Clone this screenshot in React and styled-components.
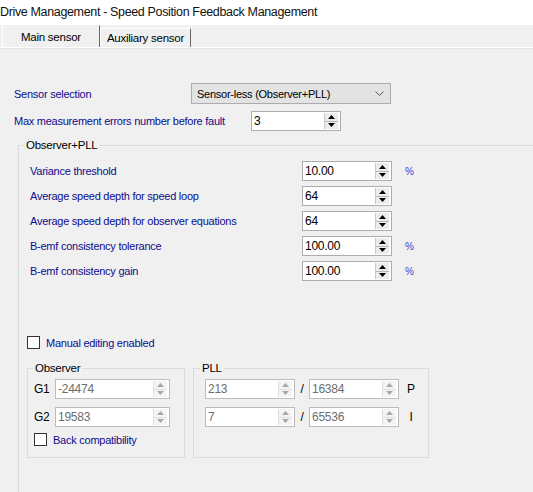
import React from "react";
import styled, { createGlobalStyle } from "styled-components";

const GlobalStyle = createGlobalStyle`
  html, body {
    margin: 0;
    padding: 0;
    background: #f0f0f0;
  }
  * {
    box-sizing: border-box;
  }
`;

const Window = styled.div`
  width: 533px;
  height: 492px;
  overflow: hidden;
  background: #f0f0f0;
  font-family: "Liberation Sans", Arial, sans-serif;
  font-size: 11px;
  letter-spacing: -0.25px;
  color: #000;
`;

const TitleBar = styled.div`
  height: 25px;
  background: #fff;
  font-size: 12.5px;
  letter-spacing: -0.35px;
  line-height: 24px;
  white-space: nowrap;
  color: #111;
`;

const TabStrip = styled.div`
  display: flex;
  align-items: flex-start;
  height: 23px;
  padding-left: 2px;
  border-bottom: 1px solid #fff;
`;

const Tab = styled.div`
  height: ${(p) => (p.$active ? "22px" : "19px")};
  margin-top: ${(p) => (p.$active ? "0" : "3px")};
  padding: 0 ${(p) => (p.$active ? "18px" : "6px")};
  line-height: ${(p) => (p.$active ? "22px" : "19px")};
  font-size: 11.5px;
  background: #f0f0f0;
  border-top: 1px solid ${(p) => (p.$active ? "#f0f0f0" : "#fff")};
  border-left: 1px solid #fff;
  border-right: 1px solid #696969;
  white-space: nowrap;
`;

const TabPage = styled.div`
  border-top: 1px solid #e3e3e3;
  padding: 34px 0 0 14px;
`;

const Row = styled.div`
  display: flex;
  align-items: center;
  height: ${(p) => p.$h || 20}px;
  margin-top: ${(p) => p.$mt || 0}px;
`;

const Label = styled.div`
  width: ${(p) => p.$w}px;
  flex-shrink: 0;
  color: ${(p) => (p.$plain ? "#000" : "#0c0c8c")};
  font-size: ${(p) => (p.$plain ? "12px" : "11px")};
  white-space: nowrap;
`;

const Combo = styled.div`
  display: flex;
  align-items: center;
  justify-content: space-between;
  width: 200px;
  height: 21px;
  padding: 0 6px 0 5px;
  background: #e3e3e3;
  border: 1px solid #adadad;
`;

const SpinBox = styled.div`
  display: flex;
  width: ${(p) => p.$w || 90}px;
  height: 20px;
  flex-shrink: 0;
  background: #fff;
  border: 1px solid ${(p) => (p.$disabled ? "#bcbcbc" : "#adadad")};
`;

const SpinValue = styled.div`
  flex: 1;
  padding-left: 2px;
  line-height: 18px;
  font-size: 12px;
  color: ${(p) => (p.$disabled ? "#6d6d6d" : "#000")};
`;

const SpinButtons = styled.div`
  display: flex;
  flex-direction: column;
  width: 14px;
  margin: 1px 2px 1px 0;
  border-left: 1px solid ${(p) => (p.$disabled ? "#e0e0e0" : "#c8c8c8")};
`;

const SpinButton = styled.div`
  flex: 1;
  display: flex;
  align-items: center;
  justify-content: center;
  background: ${(p) => (p.$disabled ? "#f4f4f4" : "#ececec")};
  border-bottom: 1px solid ${(p) => (p.$disabled ? "#e0e0e0" : "#b8b8b8")};
  &:last-child {
    border-bottom: none;
  }
`;

const Unit = styled.div`
  margin-left: 13px;
  color: #3b3bd6;
  font-size: 10px;
`;

const Group = styled.fieldset`
  margin: ${(p) => p.$margin || "0"};
  padding: 0;
  width: ${(p) => p.$w}px;
  height: ${(p) => (p.$h ? `${p.$h}px` : "auto")};
  border: 1px solid #dcdcdc;
  border-radius: 0;
  min-width: 0;
  flex-shrink: 0;
`;

const Legend = styled.legend`
  margin-left: ${(p) => p.$ml || 5}px;
  padding: 0 2px;
  line-height: 16px;
  font-size: 11.5px;
  color: #000;
`;

const GroupBody = styled.div`
  display: flex;
  flex-direction: column;
  padding: ${(p) => p.$pad};
  gap: ${(p) => p.$gap || 0}px;
`;

const CheckRow = styled.label`
  display: flex;
  align-items: center;
  gap: 6px;
  margin: ${(p) => p.$margin || "0"};
  color: #0c0c8c;
  font-size: 11px;
`;

const CheckBox = styled.span`
  width: 13px;
  height: 13px;
  background: #fff;
  border: 1px solid #333;
  flex-shrink: 0;
`;

const SubGroups = styled.div`
  display: flex;
  gap: 8px;
  margin: 6px 0 0 -3px;
`;

const Slash = styled.div`
  width: 14px;
  text-align: center;
  font-size: 12px;
`;

const Letter = styled.div`
  width: 24px;
  text-align: center;
  font-size: 12px;
`;

const Arrow = ({ up, color }) => (
  <svg width="7" height="4" viewBox="0 0 7 4">
    <polygon points={up ? "0,4 7,4 3.5,0" : "0,0 7,0 3.5,4"} fill={color} />
  </svg>
);

const Spin = ({ value, w, disabled }) => {
  const c = disabled ? "#a8a8a8" : "#000";
  return (
    <SpinBox $w={w} $disabled={disabled}>
      <SpinValue $disabled={disabled}>{value}</SpinValue>
      <SpinButtons $disabled={disabled}>
        <SpinButton $disabled={disabled}>
          <Arrow up color={c} />
        </SpinButton>
        <SpinButton $disabled={disabled}>
          <Arrow color={c} />
        </SpinButton>
      </SpinButtons>
    </SpinBox>
  );
};

const params = [
  { label: "Variance threshold", value: "10.00", unit: "%" },
  { label: "Average speed depth for speed loop", value: "64" },
  { label: "Average speed depth for observer equations", value: "64" },
  { label: "B-emf consistency tolerance", value: "100.00", unit: "%" },
  { label: "B-emf consistency gain", value: "100.00", unit: "%" },
];

const App = () => {
  return (
    <Window>
      <GlobalStyle />
      <TitleBar>Drive Management - Speed Position Feedback Management</TitleBar>
      <TabStrip>
        <Tab $active>Main sensor</Tab>
        <Tab>Auxiliary sensor</Tab>
      </TabStrip>
      <TabPage>
        <Row $h={21}>
          <Label $w={177}>Sensor selection</Label>
          <Combo>
            <span>Sensor-less (Observer+PLL)</span>
            <svg width="9" height="5" viewBox="0 0 9 5">
              <polyline points="0.5,0.5 4.5,4.5 8.5,0.5" fill="none" stroke="#555" strokeWidth="1" />
            </svg>
          </Combo>
        </Row>
        <Row $mt={7}>
          <Label $w={237}>Max measurement errors number before fault</Label>
          <Spin value="3" />
        </Row>

        <Group $w={620} $h={400} $margin="6px 0 0 4px">
          <Legend>Observer+PLL</Legend>
          <GroupBody $pad="8px 0 0 11px" $gap={5}>
            {params.map((p) => (
              <Row key={p.label}>
                <Label $w={272}>{p.label}</Label>
                <Spin value={p.value} />
                {p.unit && <Unit>{p.unit}</Unit>}
              </Row>
            ))}
            <CheckRow $margin="50px 0 0 -3px">
              <CheckBox />
              Manual editing enabled
            </CheckRow>
            <SubGroups>
              <Group $w={158} $h={98}>
                <Legend>Observer</Legend>
                <GroupBody $pad="3px 0 0 6px" $gap={8}>
                  <Row>
                    <Label $w={21} $plain>G1</Label>
                    <Spin value="-24474" w={115} disabled />
                  </Row>
                  <Row>
                    <Label $w={21} $plain>G2</Label>
                    <Spin value="19583" w={115} disabled />
                  </Row>
                  <CheckRow $margin="-2px 0 0 0">
                    <CheckBox />
                    Back compatibility
                  </CheckRow>
                </GroupBody>
              </Group>
              <Group $w={236} $h={98}>
                <Legend $ml={6}>PLL</Legend>
                <GroupBody $pad="3px 0 0 11px" $gap={8}>
                  <Row>
                    <Spin value="213" disabled />
                    <Slash>/</Slash>
                    <Spin value="16384" disabled />
                    <Letter>P</Letter>
                  </Row>
                  <Row>
                    <Spin value="7" disabled />
                    <Slash>/</Slash>
                    <Spin value="65536" disabled />
                    <Letter>I</Letter>
                  </Row>
                </GroupBody>
              </Group>
            </SubGroups>
          </GroupBody>
        </Group>
      </TabPage>
    </Window>
  );
};

export default App;
